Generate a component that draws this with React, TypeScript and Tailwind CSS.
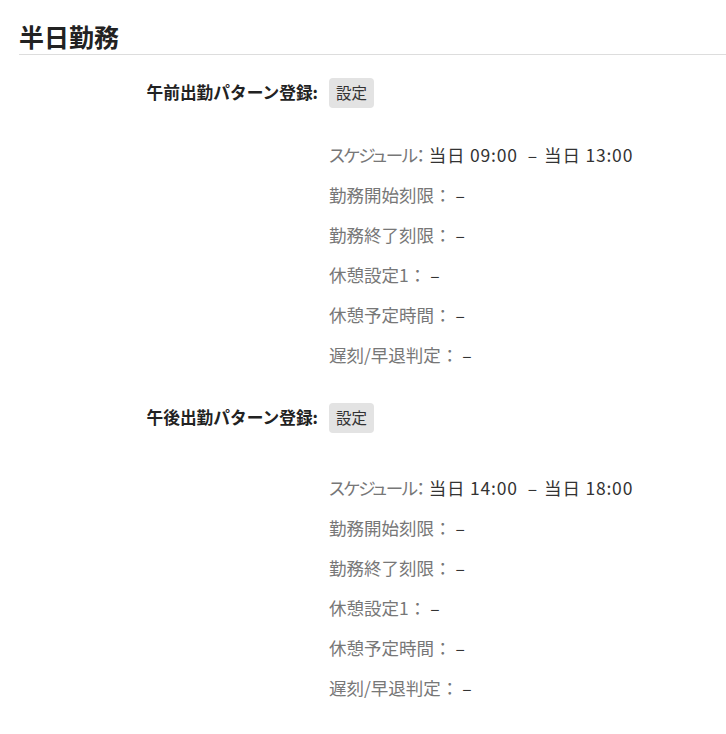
import React from 'react';

type Pattern = {
  label: string;
  start: string;
  end: string;
  gap: string;
};

const patterns: Pattern[] = [
  { label: '午前出勤パターン登録:', start: '当日 09:00', end: '当日 13:00', gap: 'mt-[27px]' },
  { label: '午後出勤パターン登録:', start: '当日 14:00', end: '当日 18:00', gap: 'mt-[35px]' },
];

const details = ['勤務開始刻限', '勤務終了刻限', '休憩設定1', '休憩予定時間', '遅刻/早退判定'];

function PatternBlock({ pattern }: { pattern: Pattern }) {
  return (
    <div className="grid grid-cols-[299px_1fr] gap-x-[11px]">
      <div className="flex h-[30px] items-center justify-end text-[16.7px] font-bold text-[#222]">
        {pattern.label}
      </div>
      <div>
        <button className="h-[30px] w-[45px] rounded-[4px] bg-[#e3e3e3] text-[15.5px] text-[#333]">
          設定
        </button>
      </div>

      {/* pattern details */}
      <div />
      <div className={`${pattern.gap} text-[17.5px] leading-[40px]`}>
        <div className="whitespace-nowrap">
          <span className="mr-[5px] tracking-[-1.5px] text-[#777] [font-feature-settings:'palt']">スケジュール：</span>
          <span className="tracking-[0.8px] text-[#333]">{pattern.start}</span>
          <span className="ml-[10px] mr-[7px] text-[#333]">–</span>
          <span className="tracking-[0.8px] text-[#333]">{pattern.end}</span>
        </div>
        {details.map((d) => (
          <div key={d} className="whitespace-nowrap">
            <span className="text-[#777]">{d}：</span>
            <span className="text-[#333]"> –</span>
          </div>
        ))}
      </div>
    </div>
  );
}

export default function App() {
  return (
    <div className="min-h-screen bg-white pl-[19px] font-['Noto_Sans_CJK_JP',sans-serif]">
      <h2 className="border-b border-[#ddd] pt-[20px] pb-[2px] text-[25px] font-bold leading-[32px] text-[#222]">
        半日勤務
      </h2>
      <div className="mt-[23px] flex flex-col gap-[28px]">
        {patterns.map((p) => (
          <PatternBlock key={p.label} pattern={p} />
        ))}
      </div>
    </div>
  );
}
